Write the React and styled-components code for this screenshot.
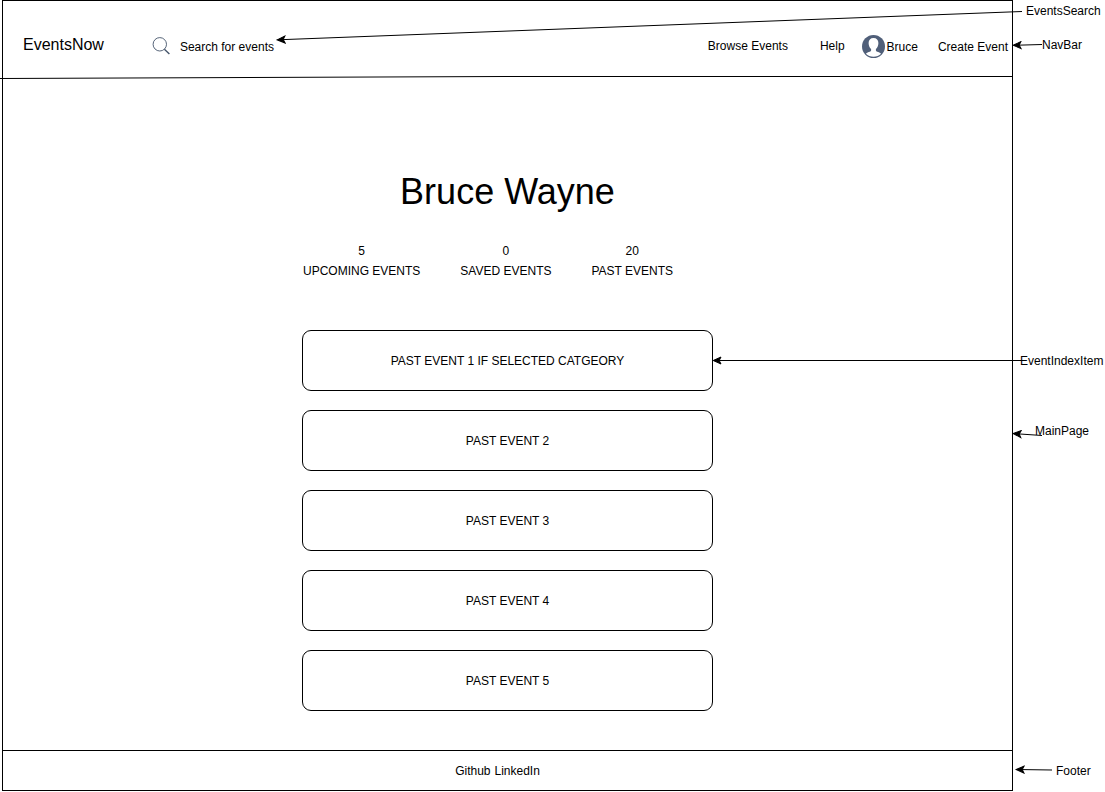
import React from "react";
import styled, { createGlobalStyle } from "styled-components";

const GlobalStyle = createGlobalStyle`
  *, *::before, *::after { box-sizing: border-box; }
  body {
    margin: 0;
    background: #fff;
    color: #000;
    font: 12px/20px "Liberation Sans", Arial, sans-serif;
  }
  a { color: inherit; text-decoration: none; white-space: nowrap; }
`;

const Board = styled.div`
  position: relative;
  display: grid;
  grid-template-columns: minmax(0, 1fr) 92px;
  padding-left: 2px;
`;

const Frame = styled.div`
  display: flex;
  flex-direction: column;
  border: 1px solid #000;
`;

const NavBar = styled.header`
  display: flex;
  align-items: center;
  height: 75px;
  padding: 16px 4px 0 20px;
`;

const Brand = styled.a`
  padding-bottom: 4px;
  font-size: 16px;
`;

const SearchLabel = styled.label`
  display: flex;
  align-items: center;
  gap: 9px;
  margin-left: 48px;
`;

const SearchInput = styled.input`
  width: 96px;
  height: 20px;
  padding: 0;
  border: 0;
  outline: 0;
  background: transparent;
  color: inherit;
  font: inherit;
  &::placeholder { color: #000; opacity: 1; }
`;

const NavLinks = styled.nav`
  display: flex;
  align-items: center;
  margin-left: auto;
`;

const PageLinks = styled.div`
  display: flex;
  gap: 32px;
  padding-bottom: 2px;
  margin-right: 17px;
`;

const UserLink = styled.a`
  display: flex;
  align-items: center;
  gap: 1px;
  margin-right: 20px;
`;

const Rule = styled.svg`
  display: block;
  width: calc(100% + 3px);
  height: 3px;
  margin-left: -3px;
`;

const Main = styled.main`
  display: flex;
  flex-direction: column;
  align-items: center;
  padding: 91px 20px 39px;
`;

const Name = styled.h1`
  margin: 0;
  font-size: 36px;
  font-weight: 400;
  line-height: 44px;
`;

const Content = styled.div`
  width: 100%;
  max-width: 411px;
`;

const Stats = styled.dl`
  display: flex;
  gap: 40px;
  margin: 27px 0 49px;
  padding-left: 1px;
`;

const Stat = styled.div`
  display: flex;
  flex-direction: column-reverse;
  text-align: center;
  white-space: nowrap;
  dd { margin: 0; }
`;

const EventList = styled.ul`
  display: flex;
  flex-direction: column;
  gap: 19px;
  margin: 0;
  padding: 0;
  list-style: none;
`;

const EventItem = styled.li`
  display: flex;
  align-items: center;
  justify-content: center;
  height: 61px;
  border: 1px solid #000;
  border-radius: 9px;
`;

const Footer = styled.footer`
  display: flex;
  align-items: center;
  justify-content: center;
  gap: 4px;
  height: 40px;
  padding-right: 20px;
  border-top: 1px solid #000;
`;

const Notes = styled.aside`
  display: flex;
  flex-direction: column;
`;

const Note = styled.span`
  margin-top: ${(p) => p.$space}px;
  padding-left: ${(p) => p.$indent}px;
  white-space: nowrap;
`;

const Arrows = styled.svg`
  position: absolute;
  top: 0;
  right: 0;
  pointer-events: none;
`;

const notes = [
  { text: "EventsSearch", space: 1, indent: 13 },
  { text: "NavBar", space: 14, indent: 29 },
  { text: "EventIndexItem", space: 296, indent: 7 },
  { text: "MainPage", space: 50, indent: 22 },
  { text: "Footer", space: 320, indent: 43 },
];

const arrows = [
  "M1022 11.5L278 39.8",
  "M1042 44.5L1014 45.3",
  "M1022 360.5L714 360.5",
  "M1042 435.5L1014 433.6",
  "M1052 770L1017 769.5",
];

const stats = [
  ["UPCOMING EVENTS", 5],
  ["SAVED EVENTS", 0],
  ["PAST EVENTS", 20],
];

const events = [
  "PAST EVENT 1 IF SELECTED CATGEORY",
  "PAST EVENT 2",
  "PAST EVENT 3",
  "PAST EVENT 4",
  "PAST EVENT 5",
];

const SearchIcon = () => (
  <svg width="19" height="19" viewBox="0 0 19 19" fill="none" stroke="#44546a" aria-hidden="true">
    <circle cx="7.8" cy="7.3" r="6.7" strokeWidth="0.9" />
    <path d="M12.4 12.2L17.4 17" strokeWidth="1.4" />
  </svg>
);

const Avatar = () => (
  <svg width="24" height="24" viewBox="0 0 24 24" aria-hidden="true">
    <circle cx="11.5" cy="11.5" r="11.5" fill="#505f79" />
    <path
      d="M11.5 3c-3.1 0-4.9 2-4.9 5.1 0 2.6 1 4.8 2.5 6v1.5c-.3 1.5-3.8 1.5-5.2 3.2 1.9 1.9 4.6 3 7.6 3s5.700-1.100 7.600-3c-1.400-1.700-4.900-1.700-5.200-3.200v-1.500c1.500-1.200 2.500-3.400 2.500-6 0-3.100-1.800-5.100-4.900-5.100z"
      fill="#fff"
    />
  </svg>
);

export default function App() {
  return (
    <>
      <GlobalStyle />
      <Board>
        <Frame>
          <NavBar>
            <Brand href="#home">EventsNow</Brand>
            <SearchLabel>
              <SearchIcon />
              <SearchInput type="text" placeholder="Search for events" aria-label="Search for events" />
            </SearchLabel>
            <NavLinks>
              <PageLinks>
                <a href="#browse">Browse Events</a>
                <a href="#help">Help</a>
              </PageLinks>
              <UserLink href="#profile">
                <Avatar />
                Bruce
              </UserLink>
              <a href="#create">Create Event</a>
            </NavLinks>
          </NavBar>
          <Rule viewBox="0 0 1012 3" preserveAspectRatio="none" aria-hidden="true">
            <path d="M0 2.5L505 0.5H1012" fill="none" stroke="#000" />
          </Rule>
          <Main>
            <Name>Bruce Wayne</Name>
            <Content>
              <Stats>
                {stats.map(([label, count]) => (
                  <Stat key={label}>
                    <dt>{label}</dt>
                    <dd>{count}</dd>
                  </Stat>
                ))}
              </Stats>
              <EventList>
                {events.map((name) => (
                  <EventItem key={name}>{name}</EventItem>
                ))}
              </EventList>
            </Content>
          </Main>
          <Footer>
            <a href="#github">Github</a>
            <a href="#linkedin">LinkedIn</a>
          </Footer>
        </Frame>
        <Notes>
          {notes.map((n) => (
            <Note key={n.text} $space={n.space} $indent={n.indent}>{n.text}</Note>
          ))}
        </Notes>
        <Arrows width="1105" height="791" viewBox="0 0 1105 791" aria-hidden="true">
          <defs>
            <marker id="head" viewBox="0 0 10 9" refX="8" refY="4.5" markerWidth="10" markerHeight="9" orient="auto">
              <path d="M8.8 4.5L1 8L2.8 4.5L1 1Z" stroke="#000" />
            </marker>
          </defs>
          {arrows.map((d) => (
            <path key={d} d={d} stroke="#000" fill="none" markerEnd="url(#head)" />
          ))}
        </Arrows>
      </Board>
    </>
  );
}
